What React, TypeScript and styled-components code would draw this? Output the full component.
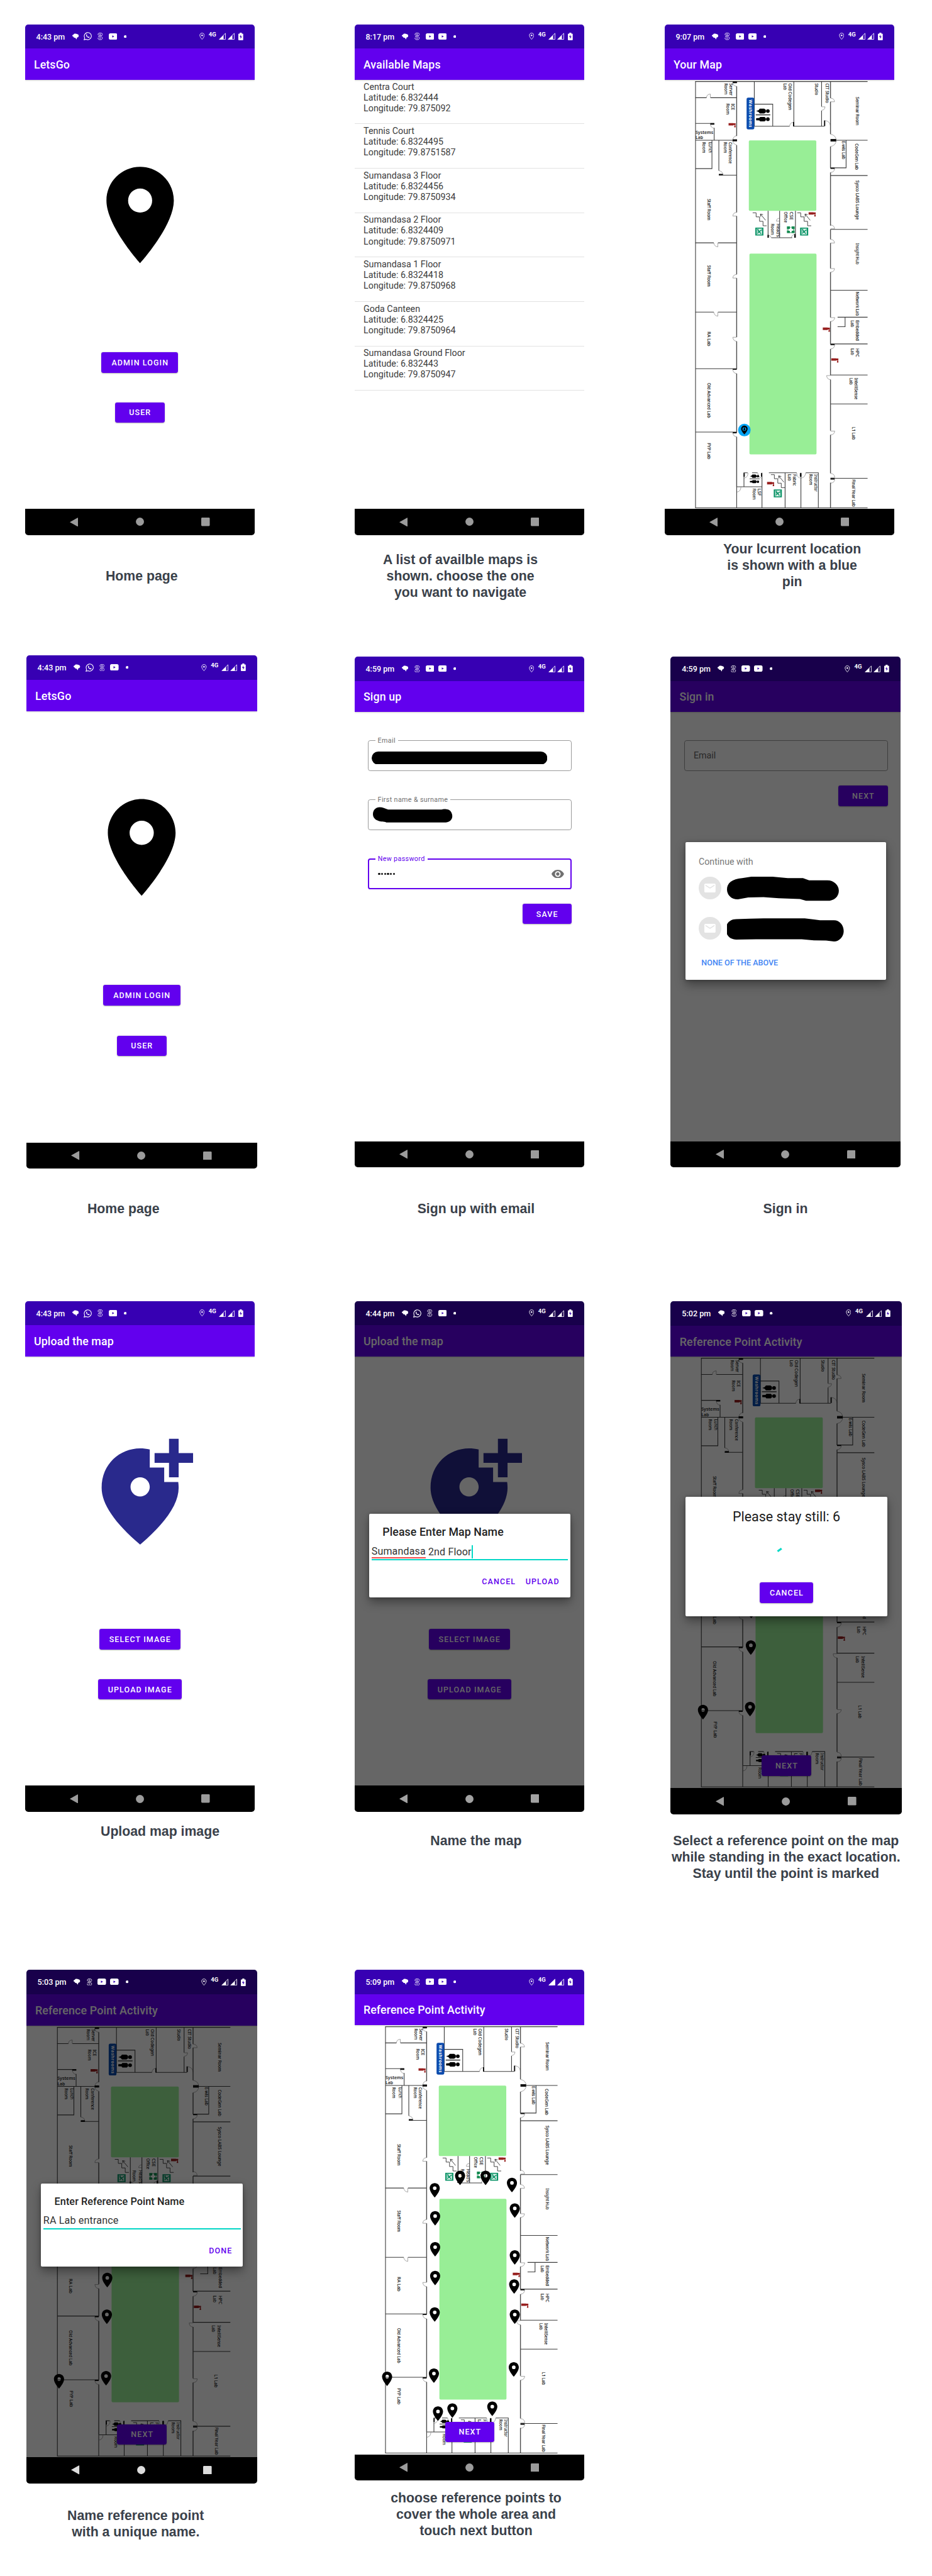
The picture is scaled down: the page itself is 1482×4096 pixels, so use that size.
import React from 'react';
import styled, { createGlobalStyle } from 'styled-components';

const Global = createGlobalStyle`
  html, body { margin: 0; padding: 0; background: #fff; }
  * { box-sizing: border-box; }
  svg { display: block; flex: none; }
`;

/* ---------- page ---------- */

const Page = styled.main`
  width: 1533px;
  height: 4237px;
  zoom: 0.96673;
  overflow: hidden;
  background: #fff;
  font-family: Roboto, 'Liberation Sans', sans-serif;
`;

const Row = styled.section<{ $h: number; $left: number }>`
  display: flex;
  align-items: flex-start;
  height: ${p => p.$h}px;
  padding-left: ${p => p.$left}px;
`;

const Cell = styled.figure<{ $w?: number; $top: number; $gap?: number }>`
  flex: none;
  width: ${p => p.$w ?? 378}px;
  margin: ${p => p.$top}px 0 0 ${p => p.$gap ?? 0}px;
`;

const Caption = styled.figcaption<{ $top: number; $shift: number }>`
  width: 400px;
  margin: ${p => p.$top}px 0 0 ${p => p.$shift}px;
  font: 700 22px/26.8px 'Liberation Sans', Arial, sans-serif;
  color: #3a414a;
  text-align: center;
  white-space: pre-line;
`;

/* ---------- phone ---------- */

const Phone = styled.div<{ $scale?: number }>`
  position: relative;
  zoom: ${p => p.$scale ?? 1};
  width: 378px;
  height: 840px;
  display: flex;
  flex-direction: column;
  border-radius: 5px;
  overflow: hidden;
  background: #fff;
`;

const StatusBar = styled.div<{ $dim?: boolean }>`
  flex: none;
  height: 40px;
  display: flex;
  align-items: center;
  padding: 0 14px 0 18.5px;
  background: ${p => (p.$dim ? '#18004b' : '#3700b3')};
  color: #fff;
`;

const Clock = styled.span`
  width: 54.3px;
  padding-top: 1px;
  font-size: 13px;
  font-weight: 500;
  line-height: 16px;
  white-space: nowrap;
`;

const Slot = styled.span<{ $w?: number }>`
  flex: none;
  width: ${p => p.$w ?? 20.5}px;
  display: flex;
  justify-content: center;
`;

const Spacer = styled.span`
  flex: 1;
`;

const Network = styled.span`
  width: 18.4px;
  padding-bottom: 7px;
  font-size: 9.8px;
  font-weight: 700;
  line-height: 12px;
  text-align: center;
`;

const AppBar = styled.header`
  flex: none;
  position: relative;
  height: 51px;
  display: flex;
  align-items: center;
  padding: 1.5px 0 0 14.8px;
  background: #6200ee;
  color: #fff;
  font-size: 18.4px;
  font-weight: 500;
  letter-spacing: 0.14px;
  box-shadow: 0 1px 2px rgba(0, 0, 0, 0.2);
  white-space: nowrap;
`;

const Body = styled.div`
  flex: 1;
  position: relative;
  display: flex;
  flex-direction: column;
  align-items: center;
`;

const NavBar = styled.nav`
  flex: none;
  height: 43px;
  display: flex;
  align-items: center;
  justify-content: space-between;
  padding: 1px 74px;
  background: #000;
`;

const Scrim = styled.div`
  position: absolute;
  inset: 40px 0 43px;
  background: rgba(0, 0, 0, 0.6);
`;

const Button = styled.button<{ $w: number }>`
  flex: none;
  width: ${p => p.$w}px;
  height: 33.5px;
  padding: 0.6px 0 0 1px;
  border: 0;
  border-radius: 3.5px;
  background: #6200ee;
  color: #fff;
  font: 500 12.9px/33px Roboto, sans-serif;
  letter-spacing: 1.15px;
  text-align: center;
  white-space: nowrap;
  box-shadow: 0 1px 2px rgba(0, 0, 0, 0.3);
`;

const PinActions = styled.div`
  display: flex;
  flex-direction: column;
  align-items: center;
  gap: 49px;
  margin-top: 130.5px;
`;

const HeroArt = styled.div`
  width: 190px;
  height: 190px;
  margin-top: 128px;
`;

/* ---------- map list ---------- */

const MapList = styled.ul`
  align-self: stretch;
  margin: 0;
  padding: 0;
  list-style: none;
`;

const MapItem = styled.li`
  height: 73.1px;
  padding: 3px 0 0 15px;
  border-bottom: 1px solid #e2e2e2;
  font-size: 14.8px;
  line-height: 17.6px;
  color: #3c3c3c;
  white-space: pre-line;
`;

/* ---------- form ---------- */

const Form = styled.form`
  align-self: stretch;
  display: flex;
  flex-direction: column;
  padding: 46.4px 20.8px 0 22.3px;
`;

const Field = styled.div<{ $focus?: boolean; $gap?: number }>`
  position: relative;
  height: 51px;
  display: flex;
  align-items: center;
  margin-bottom: ${p => p.$gap ?? 46.3}px;
  padding: 0 ${p => (p.$focus ? 10 : 11)}px 0 ${p => (p.$focus ? 13.5 : 14.6)}px;
  border: ${p => (p.$focus ? '2.1px solid #6200ee' : '1px solid #9a9a9a')};
  border-radius: 4px;
  color: #666;
  font-size: 14.8px;
`;

const FloatingLabel = styled.label<{ $focus?: boolean }>`
  position: absolute;
  top: ${p => (p.$focus ? -8 : -7)}px;
  left: ${p => (p.$focus ? 10 : 11)}px;
  padding: 0 4px;
  background: #fff;
  color: ${p => (p.$focus ? '#6200ee' : '#707070')};
  font-size: 11.1px;
  line-height: 14px;
  letter-spacing: 0.37px;
  white-space: nowrap;
`;

const Dots = styled.span`
  flex: 1;
  display: flex;
  gap: 1.4px;
  padding-left: 1px;
  i { width: 3.5px; height: 3.5px; border-radius: 50%; background: #111; }
`;

const FormButton = styled(Button)`
  align-self: flex-end;
`;

const Scribble = styled.div<{ $x: number; $y: number }>`
  position: absolute;
  left: ${p => p.$x}px;
  top: ${p => p.$y}px;
`;

/* ---------- dialogs ---------- */

const Dialog = styled.div<{ $top: number; $h: number }>`
  position: absolute;
  left: 24.3px;
  top: ${p => p.$top}px;
  width: 330.5px;
  height: ${p => p.$h}px;
  display: flex;
  flex-direction: column;
  border-radius: 2px;
  background: #fff;
  box-shadow: 0 8px 16px rgba(0, 0, 0, 0.36), 0 1px 5px rgba(0, 0, 0, 0.25);
`;

const DialogTitle = styled.h2<{ $size: number; $top: number }>`
  margin: ${p => p.$top}px 0 0 22px;
  font-size: ${p => p.$size}px;
  font-weight: 500;
  line-height: 22px;
  letter-spacing: 0.08px;
  color: #222;
  white-space: nowrap;
`;

const DialogInput = styled.div<{ $top: number }>`
  display: flex;
  align-items: center;
  margin: ${p => p.$top}px 3.8px 0;
  padding: 0 0 2px;
  border-bottom: 2.1px solid #03d6c6;
  font-size: 16.6px;
  line-height: 20px;
  letter-spacing: 0.15px;
  color: #333;
  white-space: pre;
`;

const Misspelt = styled.span`
  box-shadow: 0 2px 0 #f44848;
  line-height: 17px;
`;

const Caret = styled.span`
  width: 2px;
  height: 22px;
  margin: -1px 0;
  background: #03dac6;
`;

const DialogActions = styled.div`
  display: flex;
  justify-content: flex-end;
  gap: 16px;
  margin-top: 25.4px;
  padding-right: 17.5px;
  color: #6200ee;
  font-size: 12.9px;
  font-weight: 500;
  line-height: 20px;
  letter-spacing: 1.15px;
`;

const AccountHeading = styled.div`
  padding: 23px 0 0 22px;
  font-size: 14.7px;
  line-height: 20px;
  color: #777;
`;

const Account = styled.div`
  display: flex;
  align-items: center;
  height: 66px;
  padding-left: 22.2px;
`;

const Avatar = styled.span`
  flex: none;
  width: 37px;
  height: 37px;
  margin-right: 9px;
  display: grid;
  place-items: center;
  border-radius: 50%;
  background: #e3e3e3;
`;

const NoneLink = styled.a`
  margin: 13px 0 0 26.5px;
  color: #4285f4;
  font-size: 13px;
  font-weight: 500;
  line-height: 20px;
  white-space: nowrap;
`;

const Countdown = styled.div`
  margin-top: 20px;
  font-size: 22.1px;
  line-height: 26px;
  color: #1c1c1c;
  text-align: center;
`;

const Spinner = styled.div`
  height: 94.2px;
  padding: 36.9px 0 0 149px;
`;

const DialogButton = styled(Button)`
  align-self: center;
`;

const MapCanvas = styled.div`
  position: relative;
  width: 378px;
  height: 706px;
`;

const NextButton = styled(Button)`
  position: absolute;
  left: 149px;
  top: 652.3px;
`;

/* ---------- status icons ---------- */

type Icon = 'chat' | 'wa' | 's' | 'yt' | 'dot';

function StatusIcon({ kind }: { kind: Icon }) {
  switch (kind) {
    case 'chat':
      return (
        <svg width="11" height="11" viewBox="0 0 33 33" fill="#fff">
          <path d="M8 3C12 1 20 1 24 4c5 1 8 4 8 8 0 5-5 8-9 9l-2 9-7-8C9 22 6 20 5 16 1 16 0 13 0 11c0-3 4-4 6-5z" />
        </svg>
      );
    case 'wa':
      return (
        <svg width="13.5" height="13.5" viewBox="0 0 24 24" fill="none" stroke="#fff" strokeWidth="2">
          <path d="M1.5 22.5l1.6-5.6A10.4 10.4 0 1 1 7.2 21z" />
          <path d="M7.8 7.2c.8-1 1.6-.8 2 .2l.6 1.6-.9 1.4a8 8 0 0 0 4 3.8l1.5-1.1 2 1c.6.4.4 1.5-.4 2.2-1.6 1.3-4.2.4-6.3-1.4-2.2-1.9-4-4.6-2.5-7.7z" fill="#fff" stroke="none" />
        </svg>
      );
    case 's':
      return (
        <svg width="9" height="12" viewBox="0 0 27 36" fill="none" stroke="#fff" strokeWidth="2.8">
          <path d="M24 11V8c0-4-3-6-7-6H9C5 2 3 5 3 8c0 4 3 6 6 6h14" />
          <path d="M9 8h8M3 20h15c3 0 6 2 6 6 0 5-3 8-7 8h-7c-4 0-7-3-7-6v-3M9 27h8" />
        </svg>
      );
    case 'yt':
      return (
        <svg width="14" height="10.5" viewBox="0 0 42 31">
          <rect width="42" height="31" rx="8" fill="#fff" />
          <path d="M17 10l10 5.5-10 5.5z" fill="#3700b3" />
        </svg>
      );
    default:
      return (
        <svg width="4.5" height="4.5" viewBox="0 0 10 10">
          <circle cx="5" cy="5" r="5" fill="#fff" />
        </svg>
      );
  }
}

function Signal({ full }: { full?: boolean }) {
  return (
    <svg width="11.5" height="11.5" viewBox="0 0 34 34">
      <path d="M2 32.5L32 3v29.5z" fill={full ? '#fff' : 'none'} stroke="#fff" strokeWidth="2.6" strokeLinejoin="round" />
      <path d="M2 33L23 12v21z" fill="#fff" />
    </svg>
  );
}

const PLACE = 'M12 2C8.13 2 5 5.13 5 9c0 5.25 7 13 7 13s7-7.75 7-13c0-3.87-3.13-7-7-7zm0 9.5a2.5 2.5 0 1 1 0-5 2.5 2.5 0 0 1 0 5z';

const WITH_WA: Icon[] = ['chat', 'wa', 's', 'yt', 'dot'];
const WITH_YT: Icon[] = ['chat', 's', 'yt', 'yt', 'dot'];

interface ScreenProps {
  time: string;
  title: string;
  icons?: Icon[];
  dim?: boolean;
  scale?: number;
  fullSignal?: boolean;
  navColor?: string;
  overlay?: React.ReactNode;
  children?: React.ReactNode;
}

function Screen({ time, title, icons = WITH_YT, dim, scale, fullSignal, navColor = '#9b9b9b', overlay, children }: ScreenProps) {
  return (
    <Phone $scale={scale}>
      <StatusBar $dim={dim}>
        <Clock>{time}</Clock>
        {icons.map((k, i) => (
          <Slot key={i}><StatusIcon kind={k} /></Slot>
        ))}
        <Spacer />
        <Slot $w={16.5}>
          <svg width="9" height="12" viewBox="0 0 27 36" fill="none" stroke="#fff" strokeWidth="2.8">
            <path d="M13.5 2C7 2 2.5 6.500 2.5 13c0 8 11 20 11 20s11-12 11-20C24.5 6.500 20 2 13.5 2z" />
            <circle cx="13.5" cy="13" r="3.8" fill="#fff" stroke="none" />
          </svg>
        </Slot>
        <Network>4G</Network>
        <Slot $w={14.7}><Signal full={fullSignal} /></Slot>
        <Slot $w={14.7}><Signal /></Slot>
        <Slot $w={17}>
          <svg width="8" height="12.5" viewBox="0 0 24 37">
            <path d="M7 0h10v4h4q3 0 3 3v27q0 3-3 3H3q-3 0-3-3V7q0-3 3-3h4z" fill="#fff" />
            <path d="M13 10v8h5l-7 12v-9H6z" fill="#3700b3" />
          </svg>
        </Slot>
      </StatusBar>
      <AppBar>{title}</AppBar>
      <Body>{children}</Body>
      <NavBar>
        <svg width="13.5" height="15" viewBox="0 0 13.5 15"><path d="M0 7.5L12.8.3q.7-.2.7.6v13.2q0 .8-.7.6z" fill={navColor} /></svg>
        <svg width="13.5" height="13.5" viewBox="0 0 14 14"><circle cx="7" cy="7" r="6.9" fill={navColor} /></svg>
        <svg width="14" height="14" viewBox="0 0 14 14"><rect width="14" height="14" rx="1.5" fill={navColor} /></svg>
      </NavBar>
      {dim && <Scrim />}
      {overlay}
    </Phone>
  );
}

/* ---------- floor plan ---------- */

const WALLS_THICK = [
  'M394 341V348M394 365V610M394 655V987M394 1005V1293M394 1311V1602M394 1623V1760M394 1782V2072M394 2094V2341',
  'M857 341V423M857 441V601M857 662V768M857 790V1052M857 1071V1120M857 1138V1263M857 1282V1505M857 1525V1637M857 1661V1791M857 1812V2064M857 2085V2274M857 2321V2445',
].join('');

const WALLS = [
  'M189 341H1040M191 341V2445M189 2445H1040M394 2341V2445',
  'M189 421H245M265 421H395M191 548H283M283 570V630M191 631H395',
  'M272 631V771H191M306 631V781M306 803H395',
  'M189 1137H281M302 1137H395M189 1479H281M302 1479H395M191 1758H395M191 2071H395',
  'M481 341V562H655M676 341V562H827M813 341V465M813 485V562M481 453H572V562',
  'M885 631H1040M934 631V767H857M857 805H1040M857 1071H1040M857 1371H1040',
  'M892 1504H1040M929 1504V1551H892M857 1636H1040M857 1789H1040M857 1932H1040M857 2299H1040',
  'M549 979V1112M606 979V1112M684 979V1112M565 1112H668',
  'M428 2272H448M470 2272H497M430 2272V2341M395 2341H519M519 2272V2445',
  'M553 2272H690M633 2272V2445M711 2272V2445M735 2272H797V2445',
].join('');

const DOORS = [
  'M394 365Q376 364 374 345H394', 'M245 421Q246 404 264 403V421', 'M264 550Q266 570 283 572',
  'M394 608Q376 612 375 631M394 654Q376 650 375 634', 'M306 781Q326 784 326 803',
  'M394 987Q376 988 375 1005H394', 'M394 1293Q376 1294 375 1311H394', 'M281 1137Q283 1155 301 1157V1137',
  'M281 1479Q283 1497 301 1499V1479', 'M394 1623Q377 1622 375 1603H394', 'M394 1782Q377 1781 375 1762H394',
  'M394 2094Q377 2093 375 2074H394', 'M857 423Q876 424 877 441H857', 'M857 601Q884 606 885 631Q884 657 857 662',
  'M857 790Q876 789 878 770H857', 'M857 1049Q876 1050 877 1068H857', 'M857 1120Q876 1121 877 1138H857',
  'M857 1282Q876 1281 877 1264H857', 'M857 1525Q876 1524 878 1506H857', 'M857 1661Q876 1660 878 1640H857',
  'M857 1812Q839 1811 838 1792H857', 'M857 2085Q876 2084 878 2066H857', 'M857 2275Q877 2276 878 2295H857',
  'M857 2323Q877 2322 878 2303H857', 'M655 562Q657 544 672 543', 'M813 483Q829 482 830 466H813', 'M831 534Q854 537 857 560',
  'M606 1016Q590 1016 590 1030H606', 'M549 1100Q563 1100 565 1112M664 1112Q666 1096 684 1095',
  'M432 2298Q450 2294 450 2272M517 2298Q500 2296 498 2272', 'M395 2367Q414 2364 415 2343M690 2272Q692 2296 707 2298',
  'M713 2298Q731 2296 735 2272',
].join('');

const BLOCKS = 'M374 626h22v10h-22zM857 625h28v12h-28zM375 341h20v8h-20zM264 546h20v8h-20zM306 797h20v8h-20zM375 1758h19v6h-19zM375 2071h19v6h-19zM857 1636h20v6h-20zM857 2299h20v6h-20zM857 767h20v5h-20zM672 541h6v22h-6zM825 533h6v28h-6zM546 1098h7v14h-7zM678 1094h7v18h-7zM428 2273h6v18h-6zM514 2273h6v18h-6zM706 2273h8v18h-8z';

type Label = [number, number, number, string];

const LABELS: Label[] = [
  [360, 350, 60, 'Server'], [334, 350, 55, 'Room'], [367, 450, 32, 'ICE'], [342, 450, 54, 'Room'],
  [255, 640, 54, 'Lunch'], [226, 640, 54, 'Room'], [356, 640, 106, 'Conference'], [330, 640, 54, 'Room'],
  [250, 920, 106, 'Staff Room'], [250, 1248, 106, 'Staff Room'], [250, 1575, 72, 'RA Lab'],
  [250, 1828, 173, 'Old Advanced Lab'], [251, 2124, 81, 'FYP Lab'],
  [651, 350, 132, 'Old  Codegen'], [624, 350, 33, 'Lab'], [781, 350, 58, 'Studio'], [833, 350, 97, 'CIT Studio'],
  [981, 417, 141, 'Seminar Room'], [915, 634, 91, 'E-wis Lab'], [979, 647, 130, 'CodeGen Lab'],
  [981, 829, 194, 'Sysco LABS Lounge'], [982, 1138, 106, 'Insight Hub'], [981, 1379, 118, 'Network Lab'],
  [983, 1519, 101, 'Embedded'], [957, 1519, 34, 'Lab'], [983, 1658, 42, 'HPC'], [957, 1658, 33, 'Lab'],
  [977, 1803, 107, 'IntelliSense'], [951, 1803, 34, 'Lab'], [963, 2045, 64, 'L1 Lab'], [965, 2304, 136, 'Final Year Lab'],
  [656, 984, 40, 'CSE'], [630, 984, 53, 'Office'], [562, 1042, 56, 'Room'], [592, 1042, 66, "Head's"],
  [499, 2349, 36, 'LSF'], [472, 2349, 56, 'Room'], [672, 2279, 57, 'Fabric'], [646, 2279, 33, 'Lab'],
  [778, 2279, 86, 'Instructor'], [752, 2279, 54, 'Room'],
];

const RoomLabels = styled.g`
  font-family: 'Noto Sans', 'Open Sans', sans-serif;
  font-size: 21.5px;
  fill: #1c1c1c;
  stroke: #1c1c1c;
  stroke-width: 0.5px;
  white-space: pre;
`;

const LabSign = styled.g`
  font-family: 'Noto Sans', 'Open Sans', sans-serif;
  font-size: 21.5px;
  font-weight: 600;
  fill: #1c1c1c;
`;

function ExitSign({ x, y }: { x: number; y: number }) {
  return (
    <g transform={`translate(${x} ${y})`}>
      <rect width="40" height="39" fill="#0c9468" />
      <rect x="7" y="5" width="26" height="29" fill="#d9f0e7" />
      <path d="M10 9l10 10 12-8M20 19l-10 10M20 19l8 12M13 6v14" stroke="#0c9468" strokeWidth="4.5" fill="none" />
    </g>
  );
}

function Stairs({ x, y }: { x: number; y: number }) {
  return (
    <g transform={`translate(${x} ${y})`} fill="none" stroke="#222" strokeWidth="2.6">
      <path d="M0 0H17V20H34V42H51V64H69" />
      <path d="M64 37L39 7M51 9L38 6L40 19" />
    </g>
  );
}

function Extinguisher({ x, y }: { x: number; y: number }) {
  return (
    <path transform={`translate(${x} ${y})`} d="M0 1h24v1h11v7h-1v6h1v7h-7v-7h2v-4h-6v2H0z" fill="#98201f" />
  );
}

function Restroom({ x, y, s }: { x: number; y: number; s: number }) {
  return (
    <g transform={`translate(${x} ${y}) scale(${s})`} fill="#000">
      <circle cx="60" cy="17" r="9" />
      <path d="M2 17l12-4 6-8h22l8 6v12l-8 6H20l-6-8z" />
      <rect y="34" width="72" height="3.5" />
      <circle cx="60" cy="57" r="9" />
      <path d="M2 52l16-1 4-5h22l6 6v10l-6 6H22l-4-5-16-1z" />
    </g>
  );
}

type Pin = [number, number];

function Marker({ at: [x, y] }: { at: Pin }) {
  return (
    <g transform={`translate(${x} ${y}) scale(3.57) translate(-12 -22)`}>
      <path d={PLACE} fill="#000" />
    </g>
  );
}

function FloorPlan({ pins = [], here }: { pins?: Pin[]; here?: boolean }) {
  return (
    <svg width="378" height="706" viewBox="39 333 1134 2118">
      <rect x="454" y="632" width="333" height="347" rx="6" fill="#98ee96" />
      <rect x="457" y="1190" width="331" height="991" rx="6" fill="#98ee96" />
      <path d={DOORS} fill="none" stroke="#777" strokeWidth="2" />
      <path d={WALLS} fill="none" stroke="#3c3c3c" strokeWidth="3.4" />
      <path d={WALLS_THICK} fill="none" stroke="#4c4c4c" strokeWidth="4.4" />
      <path d={BLOCKS} fill="#111" />
      <Restroom x={488} y={470} s={1} />
      <Restroom x={458} y={2277} s={0.68} />
      <rect x="443" y="421" width="38" height="156" rx="8" fill="#0c4bad" />
      <text transform="translate(455 431) rotate(90)" fontSize="21" fontWeight="700" fill="#fff" textLength="136" fontFamily="Open Sans, sans-serif">Washrooms</text>
      <RoomLabels>
        {LABELS.map(([x, y, len, text], i) => (
          <text key={i} transform={`translate(${x} ${y}) rotate(90)`} textLength={len} lengthAdjust="spacingAndGlyphs">{text}</text>
        ))}
      </RoomLabels>
      <LabSign>
        <text x="191" y="600" textLength="88" lengthAdjust="spacingAndGlyphs">Systems</text>
        <text x="191" y="626" textLength="37" lengthAdjust="spacingAndGlyphs">Lab</text>
      </LabSign>
      <Stairs x={473} y={989} />
      <Stairs x={693} y={989} />
      <Stairs x={563} y={2281} />
      <ExitSign x={486} y={1062} />
      <ExitSign x={707} y={1062} />
      <ExitSign x={577} y={2354} />
      <rect x="642" y="1056" width="38" height="33" fill="#12894f" />
      <path d="M661 1061v24M649 1073h24" stroke="#fff" strokeWidth="9" />
      <path d="M642 1073h4M676 1073h4M661 1056v3M661 1086v3" stroke="#fff" strokeWidth="8" />
      <Extinguisher x={354} y={545} />
      <Extinguisher x={749} y={985} />
      <Extinguisher x={819} y={1554} />
      <Extinguisher x={861} y={1706} />
      <Extinguisher x={544} y={2316} />
      {pins.map((p, i) => <Marker key={i} at={p} />)}
      {here && (
        <g transform="translate(432 2061)">
          <circle r="31" fill="#08a5f5" />
          <path d="M0-22C-9-22-16-15-16-6-16 5 0 21 0 21S16 5 16-6C16-15 9-22 0-22z" fill="#000" />
          <circle cy="-5" r="9" fill="#08a5f5" />
          <path d="M-3-13h6v8l3 6h-12l3-6z" fill="#000" />
        </g>
      )}
    </svg>
  );
}

const FIRST_PINS: Pin[] = [[436, 1617], [434, 1797], [199, 2114], [430, 2099]];
const ALL_PINS: Pin[] = [
  ...FIRST_PINS,
  [559, 1123], [685, 1123], [815, 1158], [434, 1184], [436, 1322], [829, 1284], [436, 1475],
  [829, 1515], [826, 1659], [829, 1808], [824, 2068], [450, 2286], [521, 2271], [718, 2262],
];

/* ---------- screen contents ---------- */

function Home() {
  return (
    <>
      <HeroArt>
        <svg width="190" height="190" viewBox="0 0 24 24"><path d={PLACE} fill="#000" /></svg>
      </HeroArt>
      <PinActions>
        <Button $w={126.3}>ADMIN LOGIN</Button>
        <Button $w={81.3}>USER</Button>
      </PinActions>
    </>
  );
}

function Upload() {
  return (
    <>
      <HeroArt>
        <svg width="190" height="190" viewBox="0 0 24 24">
          <path
            fill="#29298c"
            d="M20 1v3h3v2h-3v3h-2V6h-3V4h3V1h2zm-8 12c1.1 0 2-.9 2-2s-.9-2-2-2-2 .9-2 2 .9 2 2 2zm2-9.75V7h3v3h2.92c.05.39.08.79.08 1.2 0 3.32-2.67 7.25-8 11.8-5.33-4.55-8-8.48-8-11.8C4 6.22 7.8 3 12 3c.68 0 1.35.08 2 .25z"
          />
        </svg>
      </HeroArt>
      <PinActions>
        <Button $w={133.7}>SELECT IMAGE</Button>
        <Button $w={137}>UPLOAD IMAGE</Button>
      </PinActions>
    </>
  );
}

const MAPS = [
  ['Centra Court', '6.832444', '79.875092'],
  ['Tennis Court', '6.8324495', '79.8751587'],
  ['Sumandasa 3 Floor', '6.8324456', '79.8750934'],
  ['Sumandasa 2 Floor', '6.8324409', '79.8750971'],
  ['Sumandasa 1 Floor', '6.8324418', '79.8750968'],
  ['Goda Canteen', '6.8324425', '79.8750964'],
  ['Sumandasa Ground Floor', '6.832443', '79.8750947'],
];

function MailIcon() {
  return (
    <svg width="18.5" height="14.7" viewBox="0 0 20 16">
      <path fill="#fff" d="M18 0H2C.9 0 0 .9 0 2v12c0 1.1.9 2 2 2h16c1.1 0 2-.9 2-2V2c0-1.1-.9-2-2-2zm0 4l-8 5-8-5V2l8 5 8-5v2z" />
    </svg>
  );
}

function ReferencePoints({ pins }: { pins: Pin[] }) {
  return (
    <MapCanvas>
      <FloorPlan pins={pins} />
      <NextButton $w={81.3}>NEXT</NextButton>
    </MapCanvas>
  );
}

export default function App() {
  return (
    <>
      <Global />
      <Page>
        <Row $h={1060} $left={41}>
          <Cell $top={40}>
            <Screen time="4:43 pm" title="LetsGo" icons={WITH_WA}><Home /></Screen>
            <Caption $top={55.5} $shift={-8}>Home page</Caption>
          </Cell>
          <Cell $top={40} $gap={164}>
            <Screen time="8:17 pm" title="Available Maps">
              <MapList>
                {MAPS.map(([name, lat, lng]) => (
                  <MapItem key={name}>{`${name}\nLatitude: ${lat}\nLongitude: ${lng}`}</MapItem>
                ))}
              </MapList>
            </Screen>
            <Caption $top={28} $shift={-25.7}>{'A list of availble maps is\nshown. choose the one\nyou want to navigate'}</Caption>
          </Cell>
          <Cell $top={40} $gap={132}>
            <Screen time="9:07 pm" title="Your Map"><FloorPlan here /></Screen>
            <Caption $top={10.5} $shift={10}>{'Your lcurrent location\nis shown with a blue\npin'}</Caption>
          </Cell>
        </Row>

        <Row $h={1060} $left={43}>
          <Cell $top={18} $w={380}>
            <Screen time="4:43 pm" title="LetsGo" icons={WITH_WA} scale={1.0053}><Home /></Screen>
            <Caption $top={53.2} $shift={-40}>Home page</Caption>
          </Cell>
          <Cell $top={20} $gap={160}>
            <Screen time="4:59 pm" title="Sign up">
              <Form>
                <Field>
                  <FloatingLabel>Email</FloatingLabel>
                  <Scribble $x={4.7} $y={17.3}>
                    <svg width="289" height="21.5"><rect width="289" height="21.5" rx="10.7" /></svg>
                  </Scribble>
                </Field>
                <Field>
                  <FloatingLabel>First name &amp; surname</FloatingLabel>
                  <Scribble $x={7} $y={12}>
                    <svg width="131" height="26" viewBox="0 0 131 26">
                      <path d="M0 12C0 5 5 .5 11 .5c5 0 9 2 14 4h88c3-1.5 12-1.5 15 3 5 7 3 17-8 18H22c-4-2-9-.5-14-3C3 21 0 17 0 12z" />
                    </svg>
                  </Scribble>
                </Field>
                <Field $focus $gap={23.5}>
                  <FloatingLabel $focus>New password</FloatingLabel>
                  <Dots><i /><i /><i /><i /><i /><i /></Dots>
                  <svg width="20.6" height="14" viewBox="0 0 22 15">
                    <path fill="#707070" d="M11 0C6 0 1.73 3.11 0 7.5c1.73 4.39 6 7.5 11 7.5s9.27-3.11 11-7.5C20.27 3.11 16 0 11 0zm0 12.5c-2.76 0-5-2.24-5-5s2.24-5 5-5 5 2.24 5 5-2.24 5-5 5zm0-8c-1.66 0-3 1.34-3 3s1.34 3 3 3 3-1.34 3-3-1.34-3-3-3z" />
                  </svg>
                </Field>
                <FormButton type="button" $w={81}>SAVE</FormButton>
              </Form>
            </Screen>
            <Caption $top={55.5} $shift={0}>Sign up with email</Caption>
          </Cell>
          <Cell $top={20} $gap={142}>
            <Screen
              time="4:59 pm"
              title="Sign in"
              dim
              overlay={
                <Dialog $top={305} $h={227}>
                  <AccountHeading>Continue with</AccountHeading>
                  <Account>
                    <Avatar><MailIcon /></Avatar>
                    <svg width="184" height="44" viewBox="0 0 184 44">
                      <path d="M0 24C0 14 8 7 25 5.5L40 3h35l25 2.5h25L135 9h30c11 0 19 8 19 17 0 10-8 16.8-19 16.8h-35L120 39.8 85 38.5 60 36.7 35 37.3 18 40.4C6 40.4 0 32 0 24z" />
                    </svg>
                  </Account>
                  <Account>
                    <Avatar><MailIcon /></Avatar>
                    <svg width="194" height="44" viewBox="2 0 194 44">
                      <path d="M0 23.2C0 14 7 6.7 17 6.7L40 6l22-.5h68l15 1.8 10 1.2h23c9 0 16 8 16 17.8 0 9-7 17.1-16 17.1L165 42l-20-.4-20-1.8H50l-33 .6C7 40.4 0 33 0 23.2z" />
                    </svg>
                  </Account>
                  <NoneLink>NONE OF THE ABOVE</NoneLink>
                </Dialog>
              }
            >
              <Form>
                <Field $gap={24}>Email</Field>
                <FormButton type="button" $w={81}>NEXT</FormButton>
              </Form>
            </Screen>
            <Caption $top={55.5} $shift={-11}>Sign in</Caption>
          </Cell>
        </Row>

        <Row $h={1100} $left={41}>
          <Cell $top={20}>
            <Screen time="4:43 pm" title="Upload the map" icons={WITH_WA}><Upload /></Screen>
            <Caption $top={20} $shift={22.3}>Upload map image</Caption>
          </Cell>
          <Cell $top={20} $gap={164}>
            <Screen
              time="4:44 pm"
              title="Upload the map"
              icons={WITH_WA}
              dim
              navColor="#a2a2a2"
              overlay={
                <Dialog $top={350} $h={137.3}>
                  <DialogTitle $size={18.4} $top={19.5}>Please Enter Map Name</DialogTitle>
                  <DialogInput $top={10.8}><Misspelt>Sumandasa</Misspelt> 2nd Floor<Caret /></DialogInput>
                  <DialogActions><span>CANCEL</span><span>UPLOAD</span></DialogActions>
                </Dialog>
              }
            >
              <Upload />
            </Screen>
            <Caption $top={35.5} $shift={0}>Name the map</Caption>
          </Cell>
          <Cell $top={20} $gap={142} $w={380}>
            <Screen
              time="5:02 pm"
              title="Reference Point Activity"
              dim
              scale={1.0053}
              overlay={
                <Dialog $top={320} $h={196}>
                  <Countdown>Please stay still: 6</Countdown>
                  <Spinner>
                    <svg width="10" height="9" viewBox="0 0 10 9"><path d="M1.5 7L8 2.2" stroke="#03dac6" strokeWidth="3.2" /></svg>
                  </Spinner>
                  <DialogButton $w={87.3}>CANCEL</DialogButton>
                </Dialog>
              }
            >
              <ReferencePoints pins={FIRST_PINS} />
            </Screen>
            <Caption $top={31.3} $shift={-10.2}>{'Select a reference point on the map\nwhile standing in the exact location.\nStay until the point is marked'}</Caption>
          </Cell>
        </Row>

        <Row $h={1017} $left={43}>
          <Cell $top={20} $w={380}>
            <Screen
              time="5:03 pm"
              title="Reference Point Activity"
              dim
              scale={1.0053}
              navColor="#dcdcdc"
              overlay={
                <Dialog $top={350} $h={135.7}>
                  <DialogTitle $size={16.7} $top={18.5}>Enter Reference Point Name</DialogTitle>
                  <DialogInput $top={10}>RA Lab entrance</DialogInput>
                  <DialogActions><span>DONE</span></DialogActions>
                </Dialog>
              }
            >
              <ReferencePoints pins={FIRST_PINS} />
            </Screen>
            <Caption $top={40.5} $shift={-19.8}>{'Name reference point\nwith a unique name.'}</Caption>
          </Cell>
          <Cell $top={20} $gap={160}>
            <Screen time="5:09 pm" title="Reference Point Activity" fullSignal>
              <ReferencePoints pins={ALL_PINS} />
            </Screen>
            <Caption $top={16.7} $shift={0}>{'choose reference points to\ncover the whole area and\ntouch next button'}</Caption>
          </Cell>
        </Row>
      </Page>
    </>
  );
}
